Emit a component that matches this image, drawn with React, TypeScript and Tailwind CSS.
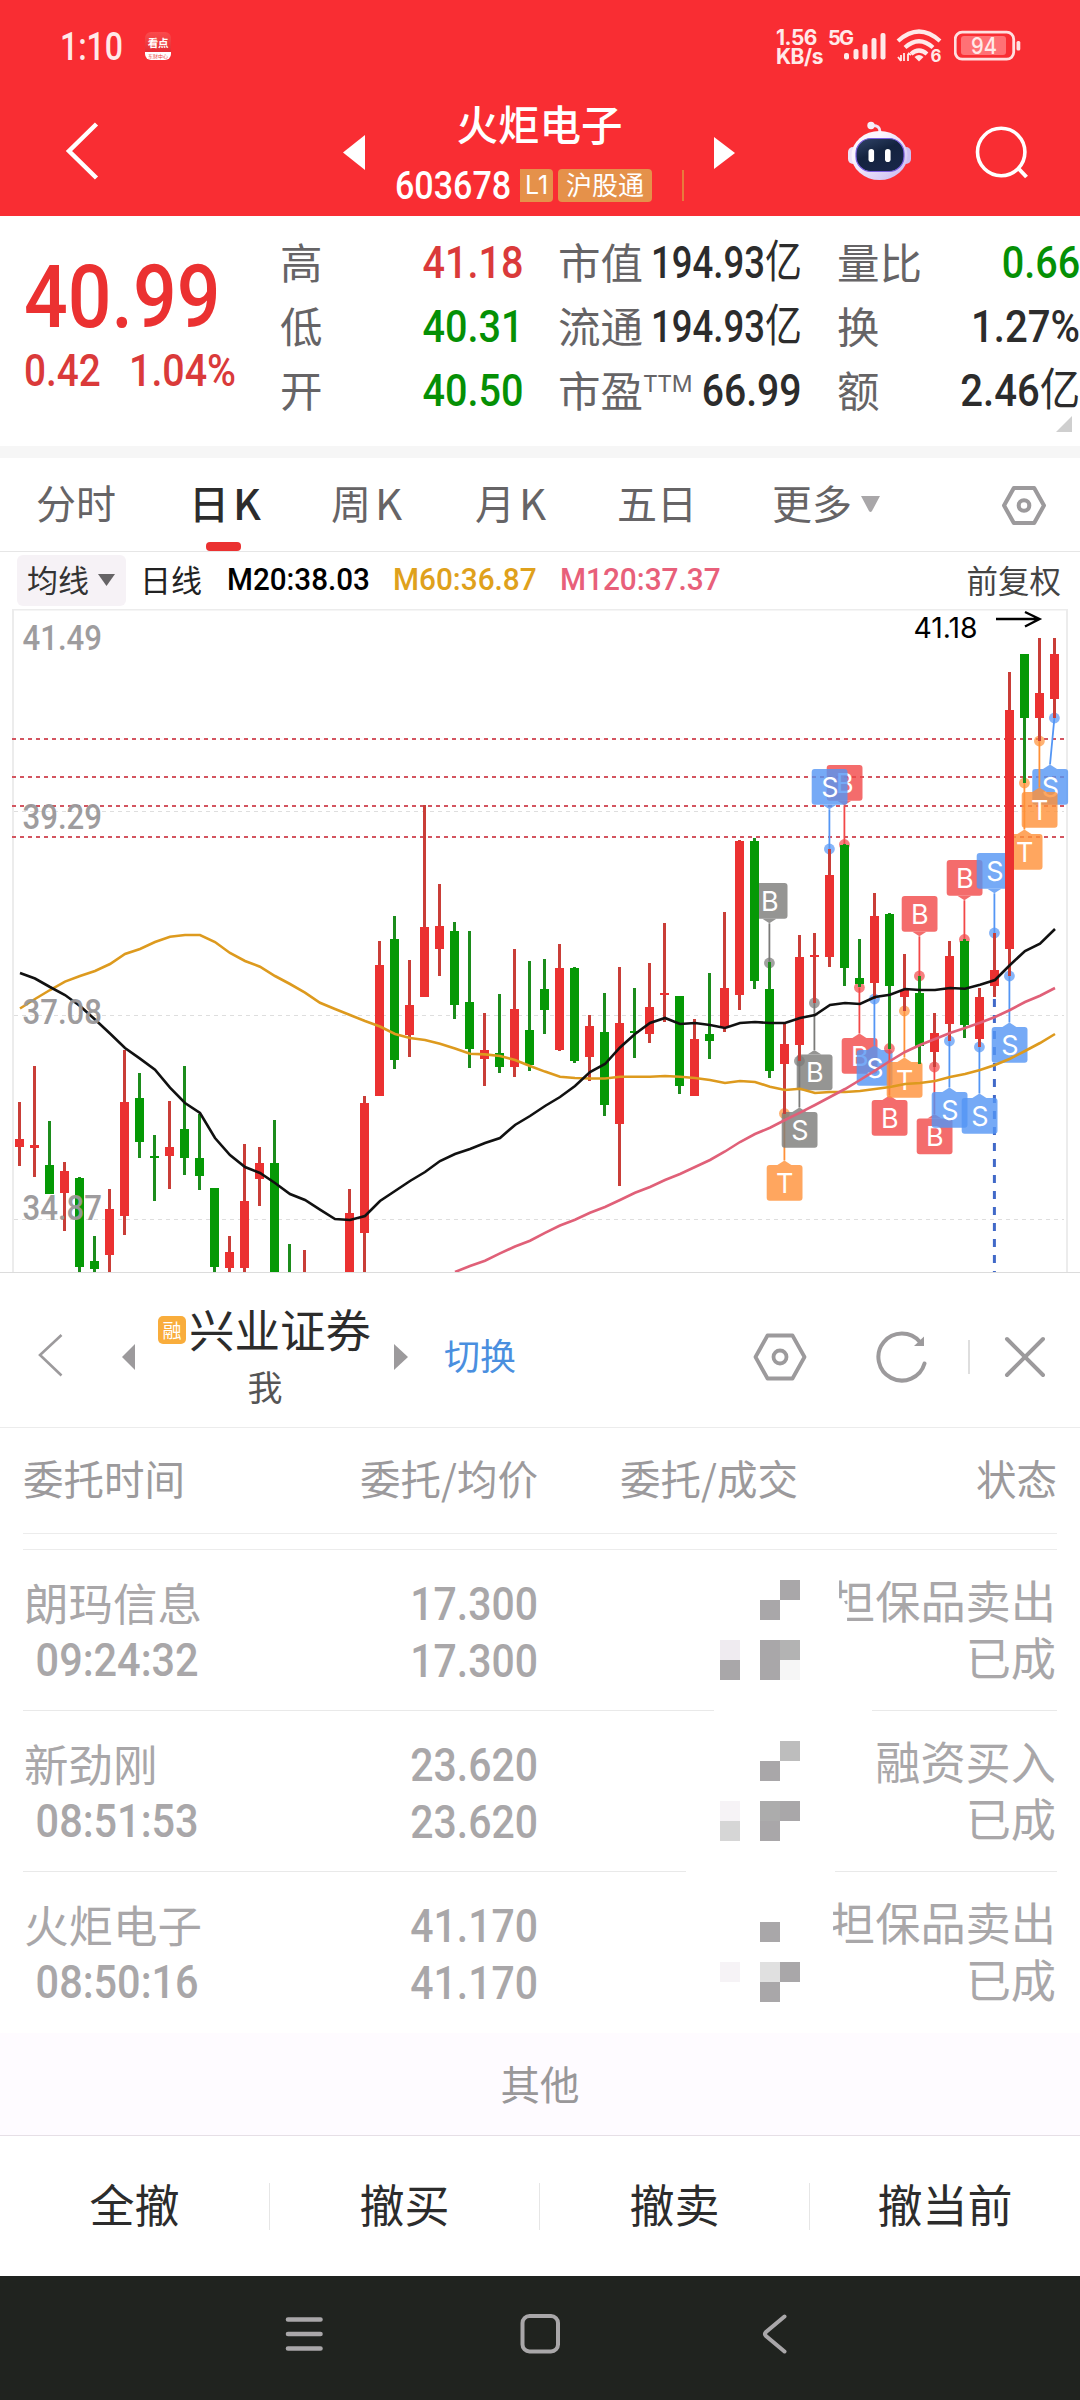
import React from "react";
import clsx from "clsx";

const RED = "#eb3131";
const GREEN = "#059905";

const candleX = (i: number) => 19.4 + i * 15;

// [index, isUp, high, bodyTop, bodyBottom, low]
const candles: [number, boolean, number, number, number, number][] = [
	[0, true, 1102, 1139, 1147, 1166],
	[1, true, 1066, 1145, 1148, 1177],
	[2, false, 1121, 1165, 1194, 1194],
	[3, true, 1162, 1171, 1193, 1231],
	[4, false, 1177, 1178, 1267, 1273],
	[5, false, 1236, 1261, 1269, 1273],
	[6, true, 1189, 1209, 1255, 1273],
	[7, true, 1050, 1102, 1216, 1235],
	[8, false, 1073, 1098, 1142, 1158],
	[9, false, 1135, 1156, 1158, 1201],
	[10, true, 1101, 1147, 1156, 1189],
	[11, false, 1066, 1129, 1158, 1175],
	[12, false, 1114, 1158, 1176, 1190],
	[13, false, 1188, 1188, 1267, 1273],
	[14, true, 1236, 1252, 1268, 1273],
	[15, true, 1144, 1201, 1268, 1273],
	[16, true, 1147, 1163, 1179, 1206],
	[17, false, 1120, 1163, 1273, 1273],
	[18, false, 1244, 1273, 1273, 1273],
	[19, true, 1250, 1273, 1273, 1273],
	[22, true, 1189, 1213, 1273, 1273],
	[23, true, 1096, 1103, 1233, 1273],
	[24, true, 941, 965, 1096, 1096],
	[25, false, 916, 939, 1060, 1069],
	[26, true, 960, 1005, 1035, 1057],
	[27, true, 805, 927, 997, 997],
	[28, true, 884, 926, 949, 976],
	[29, false, 922, 931, 1005, 1019],
	[30, false, 931, 1002, 1049, 1068],
	[31, true, 1013, 1050, 1059, 1086],
	[32, false, 994, 1053, 1067, 1073],
	[33, true, 949, 1009, 1067, 1077],
	[34, false, 961, 1030, 1065, 1071],
	[35, false, 959, 989, 1010, 1034],
	[36, true, 944, 968, 1050, 1051],
	[37, false, 967, 968, 1061, 1063],
	[38, true, 1015, 1026, 1057, 1081],
	[39, false, 993, 1032, 1105, 1116],
	[40, true, 967, 1023, 1124, 1186],
	[41, false, 988, 1031, 1033, 1058],
	[42, true, 963, 1007, 1034, 1043],
	[43, true, 923, 993, 995, 1022],
	[44, false, 996, 996, 1086, 1094],
	[45, true, 1019, 1039, 1096, 1096],
	[46, false, 973, 1034, 1041, 1059],
	[47, true, 912, 988, 1028, 1032],
	[48, true, 840, 841, 995, 1010],
	[49, false, 838, 841, 981, 989],
	[50, false, 962, 989, 1071, 1078],
	[51, true, 1023, 1044, 1064, 1114],
	[52, true, 935, 957, 1045, 1061],
	[53, true, 933, 955, 957, 1003],
	[54, true, 849, 875, 957, 967],
	[55, false, 844, 845, 968, 986],
	[56, false, 939, 978, 984, 987],
	[57, true, 893, 916, 983, 999],
	[58, false, 913, 914, 986, 1049],
	[59, true, 954, 990, 997, 1011],
	[60, false, 976, 993, 1046, 1064],
	[61, true, 1013, 1033, 1052, 1067],
	[62, true, 941, 956, 1024, 1041],
	[63, false, 939, 941, 1025, 1038],
	[64, true, 988, 997, 1039, 1047],
	[65, true, 933, 970, 986, 997],
	[66, true, 672, 710, 949, 976],
	[67, false, 654, 654, 718, 783],
	[68, true, 638, 693, 718, 741],
	[69, true, 638, 654, 699, 718],
];

const ma20 = [
	973, 978.5, 987, 995, 1006, 1019.5, 1033.5, 1048, 1058.6, 1069.6, 1087.7, 1103, 1113, 1138,
	1155, 1167, 1173, 1183, 1194, 1200, 1209.6, 1219, 1220, 1216, 1201, 1191, 1181, 1172, 1161,
	1154, 1149, 1143, 1138, 1125, 1116, 1106, 1097, 1086, 1072, 1064, 1047.5, 1034, 1023, 1018,
	1024, 1023, 1025, 1028, 1023, 1022, 1023, 1023, 1018, 1015, 1005, 1003, 1004, 997, 994.7, 989,
	990, 990, 988, 988.7, 984.7, 980, 965, 951, 943.7, 929,
];

const ma60 = [
	1008.5, 999, 990, 981.6, 976, 971, 964, 954, 949, 942, 936.8, 935, 935, 942, 953, 961, 966.7,
	976, 984, 992.6, 1002.8, 1009, 1015, 1021, 1026.5, 1034, 1038, 1040, 1043.7, 1048.5, 1053.7,
	1054.4, 1056, 1060, 1066, 1071.6, 1076.8, 1078, 1078.5, 1078.5, 1076.8, 1076.8, 1076.8, 1076,
	1076.8, 1078, 1080, 1083, 1081, 1082, 1086.7, 1090, 1088.7, 1093, 1092, 1092, 1091, 1089, 1087,
	1084, 1083, 1081, 1077, 1074, 1070, 1065, 1058.7, 1051, 1043, 1034,
];

// starts at candle 29, the earlier part is below the visible range
const ma120 = [
	1272, 1266, 1260.7, 1253.4, 1246.5, 1240.7, 1232.8, 1225.5, 1219.7, 1212.8, 1207, 1200, 1192.8,
	1187, 1180, 1174, 1167, 1160, 1151.5, 1142, 1134, 1127.7, 1120, 1112.7, 1105, 1097, 1089, 1080,
	1070.7, 1061, 1052, 1045, 1039, 1033, 1028, 1022.7, 1017, 1010, 1002, 995.7, 988,
];

const toPoints = (values: number[], from = 0) =>
	values.map((y, i) => `${candleX(i + from) + 0.6},${y}`).join(" ");

type Marker = {
	i: number;
	label: "B" | "S" | "T";
	top: number;
	dot: number;
	gray?: boolean;
	dx?: number;
};

const markers: Marker[] = [
	{ i: 55, label: "B", top: 765, dot: 844.5 },
	{ i: 54, label: "S", top: 769, dot: 849 },
	{ i: 50, label: "B", top: 883, dot: 963, gray: true },
	{ i: 60, label: "B", top: 896, dot: 976 },
	{ i: 63, label: "B", top: 860, dot: 939.5 },
	{ i: 65, label: "S", top: 853, dot: 933 },
	{ i: 67, label: "T", top: 834, dot: 783 },
	{ i: 69, label: "S", top: 769, dot: 718, dx: -4.4 },
	{ i: 68, label: "T", top: 792, dot: 741 },
	{ i: 53, label: "B", top: 1054.5, dot: 1003, gray: true },
	{ i: 51, label: "T", top: 1165, dot: 1113.5 },
	{ i: 52, label: "S", top: 1112, dot: 1061, gray: true },
	{ i: 56, label: "B", top: 1038, dot: 987.5 },
	{ i: 57, label: "S", top: 1050, dot: 999 },
	{ i: 58, label: "B", top: 1100, dot: 1048.5 },
	{ i: 59, label: "T", top: 1062, dot: 1011 },
	{ i: 61, label: "B", top: 1118.5, dot: 1067 },
	{ i: 62, label: "S", top: 1092, dot: 1041 },
	{ i: 64, label: "S", top: 1098, dot: 1047 },
	{ i: 66, label: "S", top: 1027, dot: 976 },
];

const markerColors = { B: "#f24848", S: "#5496f5", T: "#ff9138" };

const MarkerFlag: React.FC<{ marker: Marker }> = ({ marker }) => {
	const { i, label, top, dot, gray, dx = 0 } = marker;
	const x = candleX(i);
	const cx = x + dx;
	const color = gray ? "#7b7b79" : markerColors[label];
	const above = dot > top;
	const edge = above ? top + 35.8 : top;
	const tip = above ? edge + 4.5 : edge - 4.5;
	return (
		<g>
			<line x1={x} y1={dot} x2={cx} y2={tip} stroke={color} strokeWidth="1.8" />
			<circle cx={x} cy={dot} r="5.4" fill={color} opacity="0.7" />
			<g fill={color} opacity="0.8">
				<path d={`M${cx - 7} ${edge}L${cx} ${tip}L${cx + 7} ${edge}Z`} />
				<rect x={cx - 17.7} y={top} width="35.8" height="35.8" rx="3" />
			</g>
			<text
				x={cx + 0.4}
				y={top + 27.6}
				fill="#fff"
				fontSize="27"
				textAnchor="middle"
				fontFamily="Inter, Roboto, sans-serif"
			>
				{label}
			</text>
		</g>
	);
};

const axisLabels = [
	{ text: "41.49", y: 650 },
	{ text: "39.29", y: 829 },
	{ text: "37.08", y: 1024 },
	{ text: "34.87", y: 1220 },
];

const KLineChart: React.FC = () => (
	<svg className="block" width="1080" height="664" viewBox="0 609 1080 664">
		<path d="M13 1273V609.5H1067V1273" fill="none" stroke="#ececec" strokeWidth="2" />
		{[811.5, 1015.5, 1219.5].map((y) => (
			<line key={y} x1="14" x2="1064" y1={y} y2={y} stroke="#dedede" strokeWidth="1" strokeDasharray="4 4" />
		))}
		{[739, 777, 806, 837].map((y) => (
			<line key={y} x1="12" x2="1066" y1={y} y2={y} stroke="#d35560" strokeWidth="1.8" strokeDasharray="4 4" />
		))}
		<line x1="994.4" x2="994.4" y1="999" y2="1273" stroke="#4169c8" strokeWidth="3" strokeDasharray="8 8" />
		{markers.map((marker) => (
			<MarkerFlag key={marker.i} marker={marker} />
		))}
		{candles.map(([i, up, high, top, bottom, low]) => (
			<g key={i} fill={up ? RED : GREEN}>
				<rect x={candleX(i) - 1.4} y={high} width="3" height={low - high} fill={up ? "#c93e38" : "#1c8c1c"} />
				<rect x={candleX(i) - 4.4} y={top} width="9" height={bottom - top} />
			</g>
		))}
		<polyline points={toPoints(ma60)} fill="none" stroke="#dd9a1e" strokeWidth="2.6" />
		<polyline points={toPoints(ma120, 29)} fill="none" stroke="#e06078" strokeWidth="2.6" />
		<polyline points={toPoints(ma20)} fill="none" stroke="#111" strokeWidth="2.6" />
		<g fill="#999799" fontSize="34.5" fontWeight="500" fontFamily="Roboto, sans-serif" opacity="0.95">
			{axisLabels.map((label) => (
				<text key={label.text} x="22.5" y={label.y} textLength="79.5" lengthAdjust="spacingAndGlyphs">
					{label.text}
				</text>
			))}
		</g>
		<text x="913.5" y="638" fontSize="29" fontFamily="Inter, sans-serif" textLength="64" lengthAdjust="spacingAndGlyphs">
			41.18
		</text>
		<path d="M996 619H1039M1025 612L1039.5 619L1025 626.5" fill="none" stroke="#000" strokeWidth="2.4" />
		<line x1="0" x2="1080" y1="1272.5" y2="1272.5" stroke="#dcdcdc" />
	</svg>
);

const HexagonIcon: React.FC<{ className?: string; stroke?: number }> = ({ className, stroke = 3.8 }) => (
	<svg
		className={className}
		viewBox="0 0 54 48"
		fill="none"
		stroke="#9c9a9c"
		strokeWidth={stroke}
		strokeLinejoin="round"
	>
		<path d="M14.500 2.500H39.500L51.500 24L39.500 45.500H14.500L2.500 24Z" />
		<circle cx="27" cy="24" r="6.500" />
	</svg>
);

const StatusBar: React.FC = () => (
	<div className="flex h-[90px] items-start pt-[27px] text-[#ffe9e9]">
		<span className="mt-px ml-[60px] w-[85px] origin-left scale-x-[0.82] whitespace-nowrap font-[Roboto] text-[39px] leading-[38px] font-medium">
			1:10
		</span>
		<div className="mt-[5px] flex h-[28px] w-[26px] flex-col overflow-hidden rounded-[6px] bg-linear-to-b from-[#fb4a4c] to-[#d81f2c]">
			<span className="mt-[4px] block text-center text-[10.500px] leading-[14px] font-bold tracking-[-0.3px] text-white">看点</span>
			<span className="mt-auto block h-[8px] bg-white text-center text-[5px] leading-[7px] text-[#e44]">
				东财中心
			</span>
		</div>
		<div className="ml-[605px] mt-[1px] w-[52px] font-[Inter] text-[21px] leading-[19px] font-bold tracking-[-0.5px]">
			<div>1.56</div>
			<div>KB/s</div>
		</div>
		<svg className="h-[36px] w-[60px]" viewBox="828 27 60 36" fill="#ffe9e9">
			<text x="828" y="44.5" fontSize="20" fontWeight="700" fontFamily="Inter, sans-serif" textLength="26">
				5G
			</text>
			<rect x="844" y="53" width="5" height="6.5" rx="2" />
			<rect x="853.5" y="49" width="5" height="10.5" rx="2" />
			<rect x="862.5" y="44" width="5" height="15.5" rx="2" />
			<rect x="871.5" y="38" width="5" height="21.5" rx="2" />
			<rect x="880.5" y="33" width="5" height="26.5" rx="2" />
		</svg>
		<svg className="ml-[8px] h-[36px] w-[48px] overflow-visible" viewBox="896 27 48 36" fill="none" stroke="#ffe9e9" strokeWidth="4.2">
			<path d="M898 41Q919 22 940 41" />
			<path d="M905 47.5Q919 35 933 47.5" />
			<path d="M911 54Q919 47 927 54" />
			<path d="M914.5 57Q919 53 923.5 57L919 61.5Z" fill="#ffe9e9" stroke="none" />
			<path d="M901 55V61M904 53V61M908 54V61M898 57L901 61M911 55L908 53" strokeWidth="1.8" />
			<text x="930.5" y="62" fontSize="18" fontWeight="700" fontFamily="Inter, sans-serif" fill="#ffe9e9" stroke="none" textLength="11" lengthAdjust="spacingAndGlyphs">
				6
			</text>
		</svg>
		<svg className="ml-[10px] h-[36px] w-[70px]" viewBox="954 27 70 36">
			<rect x="955.2" y="32.2" width="58.5" height="27" rx="7" fill="none" stroke="#ffe0e0" strokeWidth="2.8" />
			<rect x="961" y="36" width="45" height="19" rx="3" fill="#ff7175" />
			<rect x="1016.5" y="41" width="3.8" height="9.5" rx="1.5" fill="#ffe0e0" />
			<text x="984" y="53.5" fontSize="23" fontWeight="500" fontFamily="Inter, sans-serif" fill="#ffe9e9" textAnchor="middle" textLength="26" lengthAdjust="spacingAndGlyphs">
				94
			</text>
		</svg>
	</div>
);

const RobotIcon: React.FC = () => (
	<svg className="h-[62px] w-[66px]" viewBox="846 120 66 62">
		<defs>
			<linearGradient id="shell" x1="0" y1="0" x2="1" y2="1">
				<stop offset="0.3" stopColor="#fbf5fd" />
				<stop offset="1" stopColor="#c5b6f2" />
			</linearGradient>
			<linearGradient id="visor" x1="0" y1="0" x2="0.6" y2="1">
				<stop offset="0" stopColor="#31456a" />
				<stop offset="0.5" stopColor="#14233f" />
				<stop offset="1" stopColor="#182647" />
			</linearGradient>
		</defs>
		<path d="M872 125.5Q880 125 880 132" fill="none" stroke="#f1e4f7" strokeWidth="3" />
		<circle cx="871" cy="125.5" r="3.7" fill="#f6effa" />
		<rect x="848" y="147" width="10" height="17" rx="5" fill="#eee2f8" />
		<rect x="901" y="147" width="10" height="17" rx="5" fill="#cdbff2" />
		<ellipse cx="879.5" cy="155.5" rx="28" ry="24.5" fill="url(#shell)" />
		<rect x="856" y="138.5" width="48" height="33" rx="15" fill="url(#visor)" stroke="#7a5ee0" strokeWidth="1.2" />
		<rect x="868.5" y="149" width="5.6" height="13" rx="2.8" fill="#fff" />
		<rect x="885" y="149" width="5.6" height="13" rx="2.8" fill="#fff" />
	</svg>
);

const Header: React.FC = () => (
	<header className="h-[216px] bg-[#f92d33] text-white">
		<StatusBar />
		<div className="flex h-[126px] items-start">
			<svg className="ml-[64px] mt-[30px] h-[62px] w-[38px]" viewBox="64 120 38 62" fill="none" stroke="#fff" strokeWidth="4.500">
				<path d="M96.500 124L69 151L96.500 178" />
			</svg>
			<svg className="ml-[240px] mt-[44px] h-[37px] w-[24px]" viewBox="342 134 24 37" fill="#fff">
				<path d="M365 135V170L343 152.500Z" />
			</svg>
			<div className="flex w-[347px] flex-col pt-[9px]">
				<h1 className="w-full text-center text-[41.5px] leading-[48px] font-medium">火炬电子</h1>
				<div className="mt-[17px] flex h-[42px] items-center pl-[29px]">
					<span className="w-[125px] origin-left scale-x-[0.885] pt-[2px] font-[Roboto] text-[38.500px] leading-[40px] font-medium">
						603678
					</span>
					<span className="flex h-[33px] w-[33px] items-center justify-center rounded-r-[4px] bg-[#e5914a] font-[Inter] text-[25px] leading-none">
						L1
					</span>
					<span className="ml-[5px] flex h-[33px] w-[94px] items-center justify-center rounded-[4px] bg-[#e5914a] pb-[3px] text-[26px] leading-none">
						沪股通
					</span>
					<span className="ml-[30px] h-[31px] w-[2px] bg-[#e87a3c]" />
				</div>
			</div>
			<svg className="mt-[46px] h-[34px] w-[23px]" viewBox="713 136 23 34" fill="#fff">
				<path d="M714 137V169L735 153Z" />
			</svg>
			<div className="ml-[110px] mt-[30px]">
				<RobotIcon />
			</div>
			<svg className="ml-[60px] mt-[32px] h-[60px] w-[60px]" viewBox="972 122 60 60" fill="none" stroke="#fff" strokeWidth="3.6">
				<circle cx="1001.200" cy="152" r="23.700" />
				<path d="M1018 168L1026.500 177" strokeWidth="4" />
			</svg>
		</div>
	</header>
);

const Figure: React.FC<{ className?: string; children: React.ReactNode }> = ({ className, children }) => (
	<span
		className={clsx(
			"inline-block origin-right font-[Roboto] text-[44.5px] leading-[65px] font-medium whitespace-nowrap",
			className ?? "scale-x-[0.9]"
		)}
	>
		{children}
	</span>
);

const Yi: React.FC = () => (
	<span className="font-['Noto_Sans_CJK_SC'] text-[45px] leading-[20px] font-normal">亿</span>
);

const QuotePanel: React.FC = () => (
	<section className="flex h-[230px] text-[42.5px] leading-[61px] text-[#666466]">
		<div className="w-[280px] pl-[24px] font-[Roboto] font-medium text-[#eb3131]">
			<div className="mt-[34px] origin-left scale-x-[0.885] text-[87px] leading-[94px]">40.99</div>
			<div className="flex text-[44.5px] leading-[55px] text-[#da3a3a]">
				<span className="w-[105px] origin-left scale-x-[0.87]">0.42</span>
				<span className="origin-left scale-x-[0.885]">1.04%</span>
			</div>
		</div>
		<div className="grid w-[244px] auto-rows-[64px] grid-cols-[auto_auto] content-start justify-between pt-[15px]">
			<span className="-mt-px">高</span>
			<Figure className="scale-x-[0.89] text-[#da3a3a]">41.18</Figure>
			<span className="-mt-px">低</span>
			<Figure className="scale-x-[0.89] text-[#059005]">40.31</Figure>
			<span className="-mt-px">开</span>
			<Figure className="scale-x-[0.89] text-[#059005]">40.50</Figure>
		</div>
		<div className="ml-[34px] flex w-[244px] flex-col pt-[15px] text-[#2c2c2c]">
			{["市值", "流通"].map((name) => (
				<div key={name} className="flex h-16 justify-between">
					<span className="-mt-px shrink-0 text-[#666466]">{name}</span>
					<Figure className="-ml-10 scale-x-[0.82]">
						194.93
						<Yi />
					</Figure>
				</div>
			))}
			<div className="flex h-16 justify-between">
				<span className="-mt-px flex whitespace-nowrap text-[#666466]">
					市盈
					<sup className="top-0 font-[Inter] text-[23px] leading-[52px] font-normal tracking-[-0.5px]">TTM</sup>
				</span>
				<Figure className="-ml-10 scale-x-[0.88]">66.99</Figure>
			</div>
		</div>
		<div className="relative ml-[35px] flex w-[243px] flex-col pt-[15px] text-[#2c2c2c]">
			<div className="flex h-16 justify-between">
				<span className="-mt-px text-[#666466]">量比</span>
				<Figure className="scale-x-[0.89] text-[#059005]">0.66</Figure>
			</div>
			<div className="flex h-16 justify-between">
				<span className="-mt-px text-[#666466]">换</span>
				<Figure>1.27%</Figure>
			</div>
			<div className="flex h-16 justify-between">
				<span className="-mt-px text-[#666466]">额</span>
				<Figure>
					2.46
					<Yi />
				</Figure>
			</div>
			<svg className="absolute right-[8px] bottom-[14px] h-4 w-4" viewBox="0 0 16 16" fill="#cfcfcf">
				<path d="M16 0V16H0Z" />
			</svg>
		</div>
	</section>
);

const tabs = [
	{ name: "分时", width: "w-[153px]" },
	{ name: "日", suffix: "K", width: "w-[142px]", active: true },
	{ name: "周", suffix: "K", width: "w-[144px]" },
	{ name: "月", suffix: "K", width: "w-[142px]" },
	{ name: "五日", width: "w-[155px]" },
];

const PeriodTabs: React.FC = () => (
	<nav className="flex h-[94px] items-start border-b border-[#e6e6e6] pl-[36px] text-[40px] leading-[60px] text-[#666466]">
		{tabs.map((tab) => (
			<div key={tab.name} className={clsx("flex h-[93px] flex-col pt-[14px]", tab.width)}>
				<span className={clsx("flex", tab.active && "font-medium text-[#2c2c2c]")}>
					{tab.name}
					{tab.suffix && <span className="ml-[4px] text-[42px]">{tab.suffix}</span>}
				</span>
				{tab.active && <span className="mt-auto ml-[17px] h-[9px] w-[35px] rounded-[4px] bg-[#eb3131]" />}
			</div>
		))}
		<span className="flex w-[230px] items-center pt-[14px]">
			更多
			<svg className="ml-[8px] mt-[4px] h-[17px] w-[21px]" viewBox="0 0 21 17" fill="#a9a7a9">
				<path d="M1 0H20L12 15Q10.500 17 9 15Z" />
			</svg>
		</span>
		<HexagonIcon className="mt-[27px] h-[41px] w-[44px]" stroke={5} />
	</nav>
);

const MaLegend: React.FC = () => (
	<div className="flex h-[57px] items-center pb-[1px] font-[Roboto] text-[31.5px] leading-[50px] font-medium">
		<div className="ml-[17px] flex h-[51px] w-[109px] items-center rounded-[6px] bg-[#f6f2f6] pb-[2px] pl-[10px] font-['Noto_Sans_CJK_SC'] text-[31px] font-normal text-[#333]">
			均线
			<svg className="ml-[9px] mt-[2px] h-[12px] w-[17px]" viewBox="0 0 17 12" fill="#666466">
				<path d="M0 0H17L8.500 12Z" />
			</svg>
		</div>
		<span className="ml-[14px] w-[87px] pb-[3px] font-['Noto_Sans_CJK_SC'] text-[31px] font-normal text-[#222]">
			日线
		</span>
		<span className="w-[166px] origin-left scale-x-[0.94] text-black">M20:38.03</span>
		<span className="w-[167px] origin-left scale-x-[0.945] text-[#dfa11c]">M60:36.87</span>
		<span className="origin-left scale-x-[0.945] text-[#e8607a]">M120:37.37</span>
		<span className="mr-[19px] ml-auto pb-[3px] font-['Noto_Sans_CJK_SC'] text-[31.500px] font-normal text-[#444]">
			前复权
		</span>
	</div>
);

const BrokerBar: React.FC = () => (
	<div className="flex h-[155px] items-center border-b border-[#ececec] pt-[2px]">
		<svg className="ml-[36px] mt-[8px] h-[44px] w-[28px]" viewBox="36 1334 28 44" fill="none" stroke="#9c9a9c" strokeWidth="2.6">
			<path d="M61.500 1336L40 1356L61.500 1376.500" />
		</svg>
		<svg className="ml-[58px] mt-[11px] h-[26px] w-[13px]" viewBox="0 0 13 26" fill="#9c9a9c">
			<path d="M13 0V26L0 13Z" />
		</svg>
		<div className="ml-[23px] flex w-[214px] flex-col pt-[8px]">
			<div className="flex items-start text-[45.500px] leading-[60px] whitespace-nowrap text-[#2c2c2c]">
				<span className="mt-[18px] mr-[3px] flex h-[28px] w-[28px] shrink-0 items-center justify-center rounded-[5px] bg-[#f9ad3c] pb-[2px] text-[19px] leading-none text-white">
					融
				</span>
				兴业证券
			</div>
			<div className="pt-[2px] text-center text-[35px] leading-[52px] text-[#555]">我</div>
		</div>
		<svg className="ml-[22px] mt-[11px] h-[26px] w-[14px]" viewBox="0 0 14 26" fill="#9c9a9c">
			<path d="M0 0V26L14 13Z" />
		</svg>
		<span className="ml-[36px] mt-[5px] w-[309px] text-[36px] leading-[60px] text-[#4a8fdf]">切换</span>
		<HexagonIcon className="mt-[11px] h-[48px] w-[54px]" />
		<svg className="ml-[67px] mt-[11px] h-[54px] w-[54px]" viewBox="874 1330 54 54" fill="none" stroke="#9c9a9c" strokeWidth="4">
			<path d="M924.500 1363.500A23.500 23.500 0 1 1 920 1342" strokeLinecap="round" />
			<path d="M924 1336.500V1346H914Z" fill="#9c9a9c" stroke="none" />
		</svg>
		<span className="ml-[40px] mt-[11px] h-[34px] w-[2px] bg-[#dedede]" />
		<svg className="ml-[33px] mt-[11px] h-[44px] w-[44px]" viewBox="1003 1335 44 44" fill="none" stroke="#9c9a9c" strokeWidth="4" strokeLinecap="round">
			<path d="M1007 1339L1043 1375M1043 1339L1007 1375" />
		</svg>
	</div>
);

const G = "bg-[#a9a7a9]";

// masked amounts, a 4x5 grid of 20px blocks for each order
const orders = [
	{
		name: "朗玛信息",
		time: "09:24:32",
		price: "17.300",
		side: "担保品卖出",
		sideClip: "[clip-path:polygon(9px_0,100%_0,100%_100%,17px_100%,17px_62%,12px_48%,9px_48%)]",
		blocks: [
			"", "", "", G,
			"", "", G, "",
			"", "", "", "",
			"bg-[#efebf0]", "", G, "bg-[#b3b3b3]",
			G, "", G, "bg-[#f6f6f6]",
		],
		lineLeft: "w-[691px]",
		lineRight: "w-[185px]",
	},
	{
		name: "新劲刚",
		time: "08:51:53",
		price: "23.620",
		side: "融资买入",
		blocks: [
			"", "", "", "bg-[#bdbdbd]",
			"", "", G, "",
			"", "", "", "",
			"bg-[#f6f3f6]", "", "bg-[#acacac]", G,
			"bg-[#d6d6d6]", "", G, "",
		],
		lineLeft: "w-[663px]",
		lineRight: "w-[222px]",
	},
	{
		name: "火炬电子",
		time: "08:50:16",
		price: "41.170",
		side: "担保品卖出",
		sideClip: "[clip-path:polygon(3px_0,100%_0,100%_100%,20px_100%,11px_74%,3px_74%)]",
		blocks: [
			"", "", "", "",
			"", "", G, "",
			"", "", "", "",
			"bg-[#f6f3f6]", "", "bg-[#e0e0e0]", G,
			"", "", G, "",
		],
	},
];

const OrderTable: React.FC = () => (
	<section>
		<div className="mx-[23px] flex h-[106px] items-center border-b border-[#ececec] pb-[6px] text-[40.5px] leading-[60px] text-[#9c9a9c]">
			<span className="w-[260px]">委托时间</span>
			<span className="w-[255px] text-right">委托/均价</span>
			<span className="w-[260px] text-right">委托/成交</span>
			<span className="ml-auto">状态</span>
		</div>
		<div className="mx-[23px] h-[16px] border-b border-[#ececec]" />
		{orders.map((order) => (
			<div key={order.name} className="flex h-[161px] flex-col px-[23px] text-[44.5px] leading-[57px] text-[#a9a7a9]">
				<div className="flex h-[160px] pt-[23px]">
					<div className="w-[292px]">
						<div className="pl-px">{order.name}</div>
						<div className="origin-left scale-x-[0.9] pt-[2px] pl-[14px] font-[Roboto] text-[46px] font-medium">{order.time}</div>
					</div>
					<div className="w-[223px] origin-right scale-x-[0.88] pt-[3px] text-right font-[Roboto] text-[46.5px] font-medium">
						<div>{order.price}</div>
						<div>{order.price}</div>
					</div>
					<div className="mt-[7px] ml-[182px] grid h-[100px] w-[80px] grid-cols-4 grid-rows-5">
						{order.blocks.map((block, i) => (
							<span key={i} className={block} />
						))}
					</div>
					<div className="-mt-[2px] ml-auto pr-px text-right text-[45.2px] whitespace-nowrap">
						<div className={order.sideClip}>{order.side}</div>
						<div>已成</div>
					</div>
				</div>
				<div className="flex h-px justify-between">
					<span className={clsx("bg-[#e9e9e9]", order.lineLeft)} />
					<span className={clsx("bg-[#e9e9e9]", order.lineRight)} />
				</div>
			</div>
		))}
	</section>
);

const actions = ["全撤", "撤买", "撤卖", "撤当前"];

const App: React.FC = () => (
	<div className="h-[2400px] w-[1080px] overflow-hidden bg-white font-['Noto_Sans_CJK_SC',sans-serif]">
		<Header />
		<QuotePanel />
		<div className="h-3 bg-[#f6f6f6]" />
		<PeriodTabs />
		<MaLegend />
		<KLineChart />
		<BrokerBar />
		<OrderTable />
		<div className="flex h-[103px] items-center justify-center border-b border-[#e6dfe6] bg-[#fefbff] pb-[3px] text-[39.5px] leading-none text-[#999799]">
			其他
		</div>
		<div className="grid h-[140px] grid-cols-4 items-center text-center text-[45px] text-[#2c2c2c]">
			{actions.map((action, i) => (
				<button key={action} className={clsx("h-[47px] pb-[5px] leading-[42px]", i < 3 && "border-r border-[#e6e6e6]")}>
					{action}
				</button>
			))}
		</div>
		<footer className="flex h-[124px] bg-[#20231f] pt-[35px]">
			<svg className="ml-[284px] h-[48px] w-[40px]" viewBox="284 2311 40 48" stroke="#a9a7a9" strokeWidth="4.600" strokeLinecap="round">
				<path d="M288 2319.500H320.500M288 2334H320.500M288 2348.500H320.500" />
			</svg>
			<svg className="ml-[193px] h-[48px] w-[46px]" viewBox="517 2311 46 48" fill="none" stroke="#a9a7a9" strokeWidth="4">
				<rect x="522.500" y="2316" width="35.500" height="35.500" rx="7" />
			</svg>
			<svg className="ml-[197px] h-[48px] w-[30px]" viewBox="760 2311 30 48" fill="none" stroke="#a9a7a9" strokeWidth="4" strokeLinecap="round">
				<path d="M784.500 2316.500L766 2332Q764 2334 766 2336L784.500 2351.500" />
			</svg>
		</footer>
	</div>
);

export default App;
